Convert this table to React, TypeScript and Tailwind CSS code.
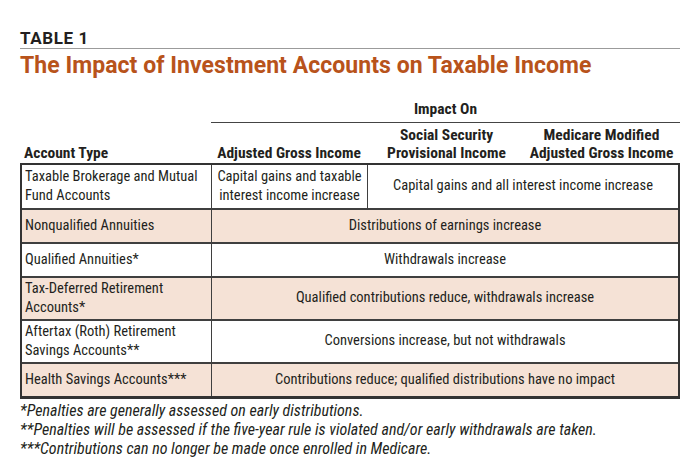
const rows: { label: string[]; shaded: boolean; split?: string[]; full?: string }[] = [
  { label: ['Taxable Brokerage and Mutual', 'Fund Accounts'], shaded: false, split: ['Capital gains and taxable', 'interest income increase'], full: 'Capital gains and all interest income increase' },
  { label: ['Nonqualified Annuities'], shaded: true, full: 'Distributions of earnings increase' },
  { label: ['Qualified Annuities*'], shaded: false, full: 'Withdrawals increase' },
  { label: ['Tax-Deferred Retirement', 'Accounts*'], shaded: true, full: 'Qualified contributions reduce, withdrawals increase' },
  { label: ['Aftertax (Roth) Retirement', 'Savings Accounts**'], shaded: false, full: 'Conversions increase, but not withdrawals' },
  { label: ['Health Savings Accounts***'], shaded: true, full: 'Contributions reduce; qualified distributions have no impact' },
];

export default function App() {
  return (
    <div className="w-[700px] h-[466px] bg-white px-5 pt-[28px] text-[#231f20] font-['Roboto_Condensed','Roboto',sans-serif] text-[14.5px] leading-[18.5px]">
      <div className="border-b border-[#9b9b9b] font-['Roboto',sans-serif] font-bold text-[17px] leading-[20px] tracking-[0.6px]">
        TABLE 1
      </div>
      <h1 className="mt-[3px] font-['Roboto',sans-serif] font-bold text-[23px] leading-[28px] tracking-[0.05px] text-[#b8531b]">
        The Impact of Investment Accounts on Taxable Income
      </h1>

      <div className="mt-[20px] grid grid-cols-[191px_1fr] font-bold text-[15.5px] leading-[18px]">
        <div />
        <div className="border-b border-[#444] pb-[4px] text-center">Impact On</div>
      </div>
      <div className="mt-[3px] grid grid-cols-[191px_156px_159px_151px] items-end font-bold text-[15.5px] leading-[18px]">
        <div className="pl-[4px]">Account Type</div>
        <div className="text-center">Adjusted Gross Income</div>
        <div className="text-center">
          Social Security
          <br />
          Provisional Income
        </div>
        <div className="text-center whitespace-nowrap">
          Medicare Modified
          <br />
          Adjusted Gross Income
        </div>
      </div>

      <div className="mt-[1px] border-2 border-b-[3px] border-[#333]">
        {rows.map((r, i) => (
          <div
            key={i}
            className={`grid grid-cols-[189px_1fr] min-h-[34px] ${i > 0 ? 'border-t-2 border-[#3f3f3f]' : ''} ${r.shaded ? 'bg-[#f5e2d6]' : 'bg-white'}`}
          >
            <div className={`flex flex-col justify-center pl-[3px] ${i === 0 ? 'py-[3px]' : 'py-[2px]'}`}>
              {r.label.map((l) => (
                <div key={l}>{l}</div>
              ))}
            </div>
            {r.split ? (
              <div className="grid grid-cols-[156px_1fr]">
                <div className="flex flex-col justify-center items-center border-l border-[#3f3f3f] py-[3px] text-center">
                  {r.split.map((l) => (
                    <div key={l}>{l}</div>
                  ))}
                </div>
                <div className="flex items-center justify-center border-l border-[#3f3f3f] text-center">{r.full}</div>
              </div>
            ) : (
              <div className="flex items-center justify-center border-l border-[#3f3f3f] text-center">{r.full}</div>
            )}
          </div>
        ))}
      </div>

      <div className="mt-[2px] italic leading-[19px] text-[16px]">
        <div>*Penalties are generally assessed on early distributions.</div>
        <div>**Penalties will be assessed if the five-year rule is violated and/or early withdrawals are taken.</div>
        <div>***Contributions can no longer be made once enrolled in Medicare.</div>
      </div>
    </div>
  );
}
